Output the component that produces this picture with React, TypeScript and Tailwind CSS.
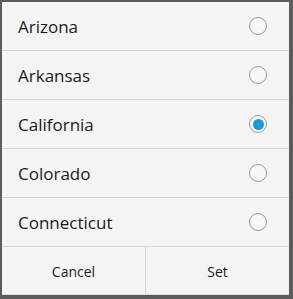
import React from 'react';

const states = ['Arizona', 'Arkansas', 'California', 'Colorado', 'Connecticut'];

const Radio: React.FC<{ checked: boolean }> = ({ checked }) => (
  <span className="flex h-[18px] w-[18px] items-center justify-center rounded-full border border-[#9a9a9a] bg-[#f7f7f7]">
    {checked && <span className="h-[11px] w-[11px] rounded-full bg-[#1c9ad6]" />}
  </span>
);

const App: React.FC = () => {
  return (
    <div className="h-[299px] w-[293px] bg-[#5c5c5c] pt-[2px] pr-[4px] pb-[4px] pl-[2px] font-['Open_Sans',sans-serif]">
      <div className="flex h-full flex-col bg-[#f4f4f4]">
        {states.map((s) => (
          <div
            key={s}
            className="flex h-[49px] items-center justify-between border-b border-[#d6d6d6] pr-[22px] pl-[16px]"
          >
            <span className="pt-[1px] text-[17px] leading-none text-[#1a1a1a]">{s}</span>
            <Radio checked={s === 'California'} />
          </div>
        ))}
        <div className="flex flex-1 border-b border-[#dcdcdc] text-[14px] text-[#1a1a1a]">
          <button className="flex-1 border-r border-[#d6d6d6] pt-[2px]">Cancel</button>
          <button className="flex-1 pt-[2px]">Set</button>
        </div>
      </div>
    </div>
  );
};

export default App;
